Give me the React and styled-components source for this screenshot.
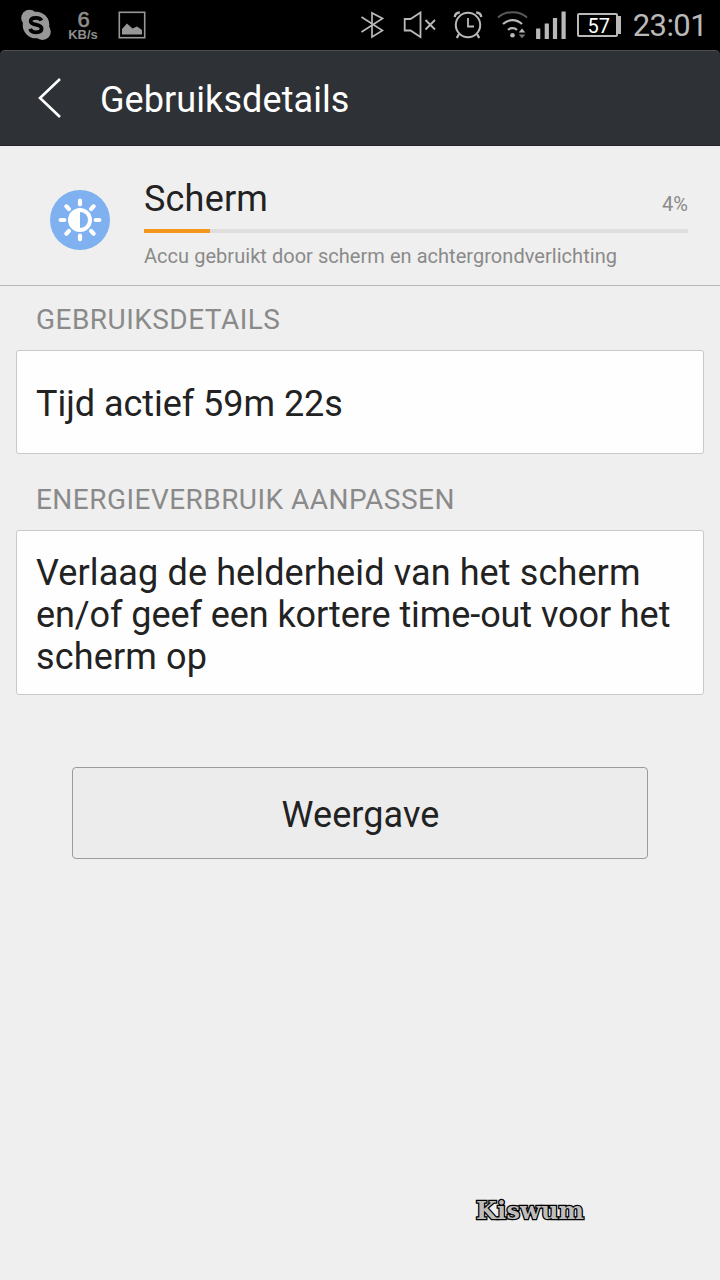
import styled, { createGlobalStyle } from 'styled-components';

const GlobalStyle = createGlobalStyle`
  * {
    box-sizing: border-box;
  }
  body {
    margin: 0;
    background: #000;
    font-family: Roboto, sans-serif;
  }
  h1, h2, h3, p {
    margin: 0;
    font-weight: 400;
  }
`;

const Screen = styled.div`
  width: 720px;
  height: 1280px;
  display: flex;
  flex-direction: column;
  overflow: hidden;
  background: #000;
`;

const StatusBar = styled.div`
  height: 50px;
  display: flex;
  align-items: center;
  justify-content: space-between;
  padding: 0 13px 0 20px;
  color: #b9b9b9;
`;

const StatusGroup = styled.div`
  height: 50px;
  display: flex;
  align-items: center;
`;

const StatusIcon = styled.svg`
  display: block;
  flex: none;
  margin-left: ${({ $gap }) => $gap || 0}px;
  fill: none;
  stroke: currentColor;
  stroke-width: 2;
  color: ${({ $color }) => $color || 'inherit'};
`;

const NetSpeed = styled.div`
  width: 34px;
  margin-left: 14px;
  text-align: center;
  color: #8e8e8e;
  font-family: 'Liberation Sans', sans-serif;
`;

const SpeedValue = styled.div`
  padding-left: 1px;
  font-size: 22px;
  line-height: 19px;
  -webkit-text-stroke: 0.6px #8e8e8e;
`;

const SpeedUnit = styled.div`
  font-size: 13px;
  line-height: 12px;
  font-weight: 700;
`;

const Battery = styled.div`
  width: 41px;
  height: 24px;
  margin-left: 11px;
  border: 2px solid #b9b9b9;
  border-radius: 2px;
  color: #fff;
  font-size: 20px;
  line-height: 23px;
  text-align: center;
  padding-left: 3px;
`;

const BatteryTip = styled.div`
  width: 3px;
  height: 18px;
  background: #b9b9b9;
`;

const Clock = styled.span`
  margin-left: 12px;
  padding-top: 2px;
  font-size: 31px;
  line-height: 50px;
  letter-spacing: -0.6px;
`;

const Header = styled.header`
  height: 96px;
  display: flex;
  align-items: center;
  padding-left: 37px;
  background: #2e3136;
  border-top: 1px solid #4b4e52;
  border-bottom: 1px solid #222429;
  border-radius: 5px 5px 0 0;
`;

const BackIcon = styled.svg`
  display: block;
  width: 26px;
  height: 42px;
  fill: none;
  stroke: #fff;
  stroke-width: 2.6;
`;

const Title = styled.h1`
  margin-left: 37px;
  padding-top: 4px;
  color: #fff;
  font-size: 36px;
  line-height: 42px;
  letter-spacing: 0.08px;
`;

const Content = styled.main`
  flex: 1;
  background: #efefef;
  color: #222;
`;

const Summary = styled.section`
  height: 140px;
  display: flex;
  padding: 32px 32px 0 50px;
  border-bottom: 1px solid #b6b6b6;
`;

const BrightnessIcon = styled.svg`
  display: block;
  flex: none;
  width: 60px;
  height: 60px;
  margin: 12px 34px 0 0;
`;

const SummaryBody = styled.div`
  flex: 1;
`;

const SummaryRow = styled.div`
  display: flex;
  justify-content: space-between;
  height: 51px;
`;

const SummaryName = styled.h2`
  font-size: 36px;
  line-height: 42px;
  letter-spacing: 0.2px;
`;

const Percent = styled.span`
  padding-top: 14px;
  color: #8a8a8a;
  font-size: 20px;
  line-height: 24px;
`;

const Track = styled.div`
  height: 4px;
  background: #dedede;
`;

const Fill = styled.div`
  height: 4px;
  background: #f2971b;
`;

const Hint = styled.p`
  margin-top: 11px;
  color: #8a8a8a;
  font-size: 20px;
  line-height: 24px;
  letter-spacing: 0.04px;
  white-space: nowrap;
`;

const SectionTitle = styled.h3`
  height: ${({ $height }) => $height}px;
  display: flex;
  align-items: flex-end;
  padding: 0 0 13px 36px;
  color: #8a8a8a;
  font-size: 28px;
  line-height: 34px;
  letter-spacing: 0.46px;
  white-space: nowrap;
`;

const Card = styled.div`
  height: ${({ $height }) => $height}px;
  display: flex;
  flex-direction: column;
  justify-content: center;
  margin: 0 16px;
  padding: 4px 19px 0;
  background: #fefefe;
  border: 1px solid #c9c9c9;
  border-radius: 3px;
  font-size: 36px;
  line-height: 42px;
`;

const Line = styled.span`
  display: block;
  letter-spacing: ${({ $spacing }) => $spacing || 0}px;
  white-space: nowrap;
`;

const DisplayButton = styled.button`
  display: block;
  width: 576px;
  height: 92px;
  margin: 72px auto 0;
  padding: 3px 0 0 1px;
  background: #ececec;
  border: 1px solid #9b9b9b;
  border-radius: 4px;
  color: #222;
  font: 400 36px/42px Roboto, sans-serif;
  letter-spacing: 0.1px;
`;

const Signature = styled.div`
  margin: 337px 0 0 476px;
  color: #bdbdbd;
  font: 700 24px/30px 'DejaVu Serif', serif;
  letter-spacing: 0.2px;
  -webkit-text-stroke: 2.6px #000;
  paint-order: stroke fill;
`;

const rays = [0, 45, 90, 135, 180, 225, 270, 315];

const UsageBar = ({ width }) => (
  <Track>
    <Fill style={{ width }} />
  </Track>
);

const App = () => {
  return (
    <Screen>
      <GlobalStyle />
      <StatusBar>
        <StatusGroup>
          {/* skype */}
          <StatusIcon width="32" height="32" viewBox="0 0 32 32" $color="#979797">
            <g fill="currentColor" stroke="none">
              <circle cx="16" cy="16" r="13.3" />
              <circle cx="9.5" cy="9" r="8.3" />
              <circle cx="22.5" cy="22.7" r="8.3" />
            </g>
            <path
              d="M21.5 11.5C20.5 9.3 18.5 8.8 16 8.8C12.8 8.8 10.7 10 10.7 12.2C10.7 17 21.6 14.3 21.6 19.5C21.6 22 19.2 23.3 16 23.3C13.2 23.3 11 22.3 10.1 19.8"
              stroke="#000"
              strokeWidth="3.8"
            />
          </StatusIcon>
          <NetSpeed>
            <SpeedValue>6</SpeedValue>
            <SpeedUnit>KB/s</SpeedUnit>
          </NetSpeed>
          {/* picture */}
          <StatusIcon width="28" height="28" viewBox="0 0 28 28" $gap={18} $color="#979797">
            <rect x="1.3" y="1.3" width="25.4" height="25.4" strokeWidth="1.6" />
            <path
              d="M4 23.5V18L9 12.5L14.5 17.5L19 15.5L24 19V23.5Z"
              fill="currentColor"
              stroke="none"
            />
          </StatusIcon>
        </StatusGroup>
        <StatusGroup>
          {/* bluetooth */}
          <StatusIcon width="24" height="28" viewBox="0 0 24 28">
            <path d="M1.5 6L22.5 19.5L12 26V2L22.5 7.5L1.5 21" strokeWidth="1.7" />
          </StatusIcon>
          {/* muted speaker */}
          <StatusIcon width="34" height="28" viewBox="0 0 34 28" $gap={19}>
            <path d="M1.7 8H7.5L17.5 1.5V26L7.5 19.5H1.7Z" strokeWidth="1.8" />
            <path d="M22.5 9L32 18.5M32 9L22.5 18.5" strokeWidth="1.9" />
          </StatusIcon>
          {/* alarm */}
          <StatusIcon width="30" height="28" viewBox="0 0 30 28" $gap={16}>
            <circle cx="15" cy="14" r="12.2" />
            <path d="M15 7V15.5H21" strokeWidth="1.8" />
            <path d="M1.7 6C2 3.5 4 1.7 6.8 1.5M23.2 1.5C26 1.7 28 3.5 28.3 6M6 23L3.8 27M24 23L26.2 27" strokeWidth="2.3" />
          </StatusIcon>
          {/* wifi */}
          <StatusIcon width="32" height="30" viewBox="0 0 32 30" $gap={14}>
            <path d="M1 7.5C9 0.5 22 0.5 30 7.5" stroke="#595959" />
            <path d="M6 14C11.5 8.7 19.5 8.7 25 14" strokeWidth="2.2" />
            <path d="M11 19.8C13.5 17.6 17.5 17.6 20 19.8" strokeWidth="2.2" />
            <circle cx="15.5" cy="25.2" r="2.3" fill="currentColor" stroke="none" />
            <path d="M21.7 22.5L25 18.5L28.3 22.5Z" fill="currentColor" stroke="none" />
            <path d="M21.7 24.5L25 28.2L28.3 24.5Z" fill="#777" stroke="none" />
          </StatusIcon>
          {/* signal */}
          <StatusIcon width="30" height="28" viewBox="0 0 30 28" $gap={7}>
            <path d="M2.2 28V17.5M10.8 28V12.5M19 28V7M27.6 28V0.5" strokeWidth="4.2" />
          </StatusIcon>
          <Battery>57</Battery>
          <BatteryTip />
          <Clock>23:01</Clock>
        </StatusGroup>
      </StatusBar>
      <Header>
        <BackIcon viewBox="0 0 26 42">
          <path d="M23 2L3 21L23 40" />
        </BackIcon>
        <Title>Gebruiksdetails</Title>
      </Header>
      <Content>
        <Summary>
          <BrightnessIcon viewBox="0 0 60 60">
            <circle cx="30" cy="30" r="30" fill="#7fb1f0" />
            <circle cx="30" cy="30" r="12" fill="#fff" />
            <path d="M30 22A8 8 0 0 1 30 38Z" fill="#7fb1f0" />
            {rays.map(angle => (
              <path
                key={angle}
                d="M30 10.7V14.3"
                stroke="#fff"
                strokeWidth="4.2"
                strokeLinecap="round"
                transform={`rotate(${angle} 30 30)`}
              />
            ))}
          </BrightnessIcon>
          <SummaryBody>
            <SummaryRow>
              <SummaryName>Scherm</SummaryName>
              <Percent>4%</Percent>
            </SummaryRow>
            <UsageBar width={66} />
            <Hint>Accu gebruikt door scherm en achtergrondverlichting</Hint>
          </SummaryBody>
        </Summary>
        <SectionTitle $height={64}>GEBRUIKSDETAILS</SectionTitle>
        <Card $height={104}>
          <Line $spacing={-0.04}>Tijd actief 59m 22s</Line>
        </Card>
        <SectionTitle $height={76}>ENERGIEVERBRUIK AANPASSEN</SectionTitle>
        <Card $height={165}>
          <Line $spacing={0.12}>Verlaag de helderheid van het scherm</Line>
          <Line $spacing={-0.08}>en/of geef een kortere time-out voor het</Line>
          <Line $spacing={0.15}>scherm op</Line>
        </Card>
        <DisplayButton>Weergave</DisplayButton>
        <Signature>Kiswum</Signature>
      </Content>
    </Screen>
  );
};

export default App;
